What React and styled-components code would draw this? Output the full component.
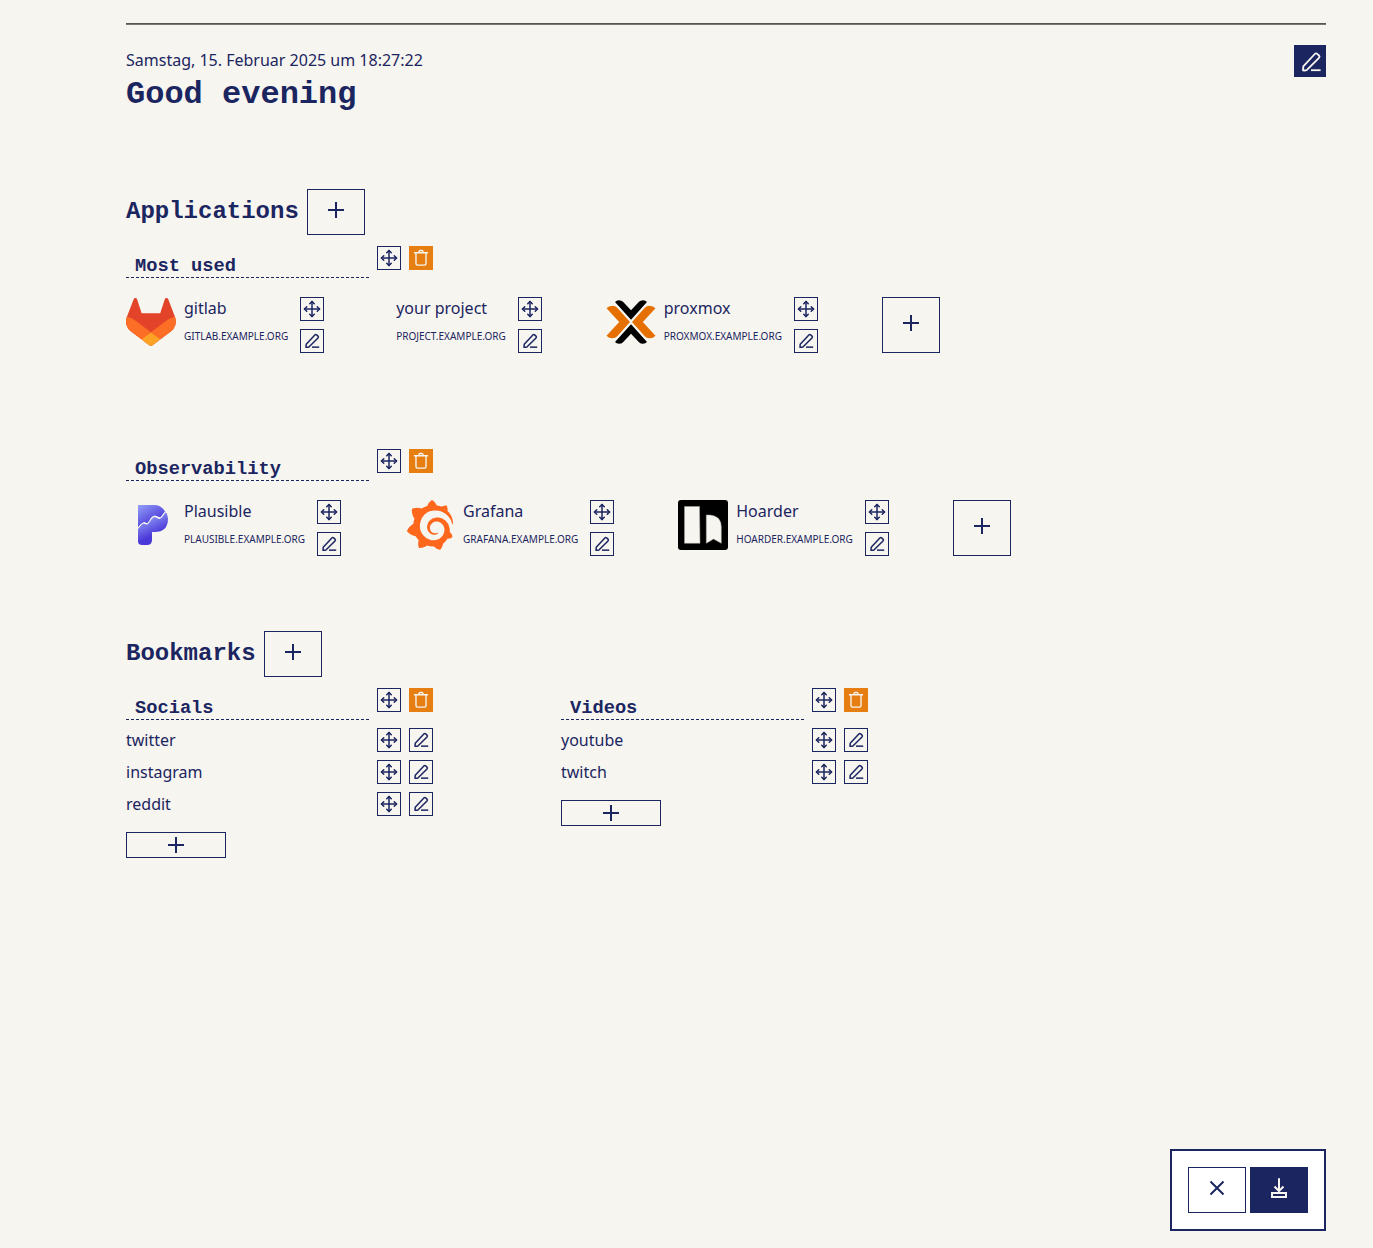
import React from "react";
import styled, { createGlobalStyle, css } from "styled-components";
import { Move } from "lucide-react";
import { SiGrafana } from "react-icons/si";

const navy = "#1b2560";
const paper = "#f7f5f0";
const orange = "#e67e12";

const GlobalStyle = createGlobalStyle`
  *, *::before, *::after { box-sizing: border-box; }
  body {
    margin: 0;
    background: ${paper};
    color: ${navy};
    font: 16px/24px "Noto Sans", sans-serif;
  }
  h1, h2, h3, p { margin: 0; }
  h1, h2, h3 { font-family: "Liberation Mono", monospace; font-weight: 700; }
  svg { display: block; flex: none; }
`;

const Shell = styled.div`
  min-height: 100vh;
  padding-left: 79px;
  display: flex;
`;

const Page = styled.main`
  width: 100%;
  max-width: 1200px;
  margin: 0 auto;
  padding: 23px 0 17px;
  display: flex;
  flex-direction: column;
`;

const Rule = styled.hr`
  width: 100%;
  margin: 0 0 20px;
  border: 0;
  border-top: 1px solid #555;
  border-bottom: 1px solid #777;
`;

const Header = styled.header`
  display: flex;
  justify-content: space-between;
  align-items: flex-start;
  margin-bottom: 71px;
`;

const Greeting = styled.div`
  padding-top: 3px;
  h1 { font-size: 32px; line-height: 46px; }
`;

const Section = styled.section`
  display: flex;
  flex-direction: column;
  margin-bottom: 75px;
`;

const SectionHead = styled.div`
  display: flex;
  align-items: center;
  gap: 8px;
  margin-bottom: 11px;
  h2 { font-size: 24px; line-height: 28px; }
`;

const Button = styled.button`
  display: flex;
  align-items: center;
  justify-content: center;
  flex: none;
  padding: 0;
  border: 1px solid ${navy};
  border-radius: 0;
  background: transparent;
  color: ${navy};
  cursor: pointer;
`;

const SmallButton = styled(Button)`
  width: 24px;
  height: 24px;
  ${(p) => p.$danger && css`
    background: ${orange};
    border-color: ${orange};
    color: ${paper};
  `}
`;

const EditButton = styled(Button)`
  width: 32px;
  height: 32px;
  padding: 2px 0 0 2px;
  background: ${navy};
  color: ${paper};
`;

const WideButton = styled(Button)`
  width: 58px;
  height: ${(p) => (p.$tall ? 56 : 46)}px;
  padding-bottom: 4px;
  ${(p) => p.$filled && css`
    background: ${navy};
    color: ${paper};
  `}
`;

const AddBookmark = styled(Button)`
  width: 100px;
  height: 26px;
  margin-top: 8px;
`;

const Groups = styled.div`
  display: flex;
  flex-direction: column;
  gap: 96px;
`;

const Columns = styled.div`
  display: flex;
  flex-wrap: wrap;
  gap: 32px 128px;
`;

const GroupHead = styled.div`
  display: flex;
  align-items: flex-start;
  gap: 8px;
  h3 { display: flex; }
`;

const NameInput = styled.input`
  width: 243px;
  height: 32px;
  padding: 8px 9px 0;
  border: 0;
  border-bottom: 1px dashed ${navy};
  border-radius: 0;
  background: transparent;
  color: inherit;
  font: inherit;
  outline: none;
`;

const Apps = styled.div`
  display: flex;
  flex-wrap: wrap;
  gap: 32px 64px;
  margin-top: 19px;
`;

const AppItem = styled.div`
  display: flex;
  gap: 8px;
`;

const AppLink = styled.a`
  display: flex;
  gap: 8px;
  color: inherit;
  text-decoration: none;
`;

const AppText = styled.span`
  display: flex;
  flex-direction: column;
  gap: 8px;
  padding-right: 4px;
  line-height: 22px;
  small { font-size: 10px; line-height: 18px; }
`;

const Stack = styled.div`
  display: flex;
  flex-direction: column;
  gap: 8px;
`;

const Bookmarks = styled.div`
  display: flex;
  flex-direction: column;
  gap: 8px;
  width: 307px;
`;

const BookmarkRow = styled.div`
  display: flex;
  gap: 8px;
  a { flex: 1; color: inherit; text-decoration: none; }
`;

const SavePanel = styled.div`
  position: sticky;
  bottom: 17px;
  align-self: flex-end;
  margin-top: auto;
  display: flex;
  gap: 4px;
  padding: 16px;
  border: 2px solid ${navy};
  background: #fff;
`;

const Stroke = ({ size = 24, width = 2, children }) => (
  <svg width={size} height={size} viewBox="0 0 24 24" fill="none" stroke="currentColor" strokeWidth={width} aria-hidden="true">
    {children}
  </svg>
);

const PlusIcon = () => <Stroke><path d="M12 4v16M4 12h16" /></Stroke>;
const CloseIcon = () => <Stroke><path d="M5.5 5.5l13 13M18.5 5.5l-13 13" /></Stroke>;
const SaveIcon = () => (
  <Stroke><path d="M12 2.3v13M7.5 10.5l4.5 4.5 4.5-4.5M5 17h14v4H5z" /></Stroke>
);
const PencilIcon = ({ size = 18 }) => (
  <Stroke size={size} width={size > 20 ? 1.8 : 2}>
    <path strokeLinejoin="round" d="M4 20.4L4.3 16.4L15.8 4C16.6 3.1 17.4 3.1 18.2 3.9L20 5.5C20.8 6.3 20.8 7.1 20 7.9L8.2 19.7C6.9 20.5 5.5 20.6 4 20.4Z" />
    <path d="M12 20.2h9.6" />
  </Stroke>
);
const TrashIcon = () => (
  <Stroke size={18} width={1.8}>
    <path strokeLinejoin="round" d="M2.6 5h18.8M9.4 5V3.4Q9.4 2 10.8 2h2.4q1.4 0 1.4 1.4V5M5.3 5v14.4q0 2 2 2h9.4q2 0 2-2V5" />
  </Stroke>
);

const MoveButton = ({ name }) => (
  <SmallButton type="button" aria-label={`Move ${name}`}><Move size={18} /></SmallButton>
);
const PencilButton = ({ name }) => (
  <SmallButton type="button" aria-label={`Edit ${name}`}><PencilIcon /></SmallButton>
);

const GitlabLogo = () => (
  <svg width="50" height="50" viewBox="0 0 25 24" aria-hidden="true">
    <path fill="#E24329" d="M24.507 9.5l-.034-.09L21.082.562a.896.896 0 0 0-1.694.091l-2.29 7.01H7.825L5.535.653A.898.898 0 0 0 3.841.563L.451 9.411.416 9.5a6.297 6.297 0 0 0 2.09 7.278l.012.01.03.022 5.16 3.867 2.56 1.935 1.554 1.176a1.051 1.051 0 0 0 1.268 0l1.555-1.176 2.56-1.935 5.197-3.89.014-.01A6.297 6.297 0 0 0 24.507 9.5Z" />
    <path fill="#FC6D26" d="M24.507 9.5l-.034-.09a11.44 11.44 0 0 0-4.56 2.051l-7.447 5.632 4.742 3.584 5.197-3.89.014-.01A6.297 6.297 0 0 0 24.507 9.5Z" />
    <path fill="#FCA326" d="M7.707 20.677l2.56 1.935 1.555 1.176a1.051 1.051 0 0 0 1.268 0l1.555-1.176 2.56-1.935-4.743-3.584-4.755 3.584Z" />
    <path fill="#FC6D26" d="M5.01 11.461a11.43 11.43 0 0 0-4.56-2.05L.416 9.5a6.297 6.297 0 0 0 2.09 7.278l.012.01.03.022 5.16 3.867 4.745-3.584-7.444-5.632Z" />
  </svg>
);

const ProxmoxLogo = () => (
  <svg width="50" height="50" viewBox="0 0 50 50" aria-hidden="true">
    <path d="M9 5Q10.5 3.3 13 3.3Q15.5 3.3 17 4.8L25 13.3L33 4.8Q34.5 3.3 37 3.3Q39.5 3.3 41 5L25 22.8Z" />
    <path d="M9 45Q10.5 46.7 13 46.7Q15.5 46.7 17 45.2L25 36.7L33 45.2Q34.5 46.7 37 46.7Q39.5 46.7 41 45L25 27.2Z" />
    <path fill="#E57000" d="M.5 11.3Q2.7 8.7 6.5 8.7Q9.3 8.7 11 10.5L24 25L11 39.5Q9.3 41.3 6.5 41.3Q2.7 41.3 .5 38.7L13.2 25Z" />
    <path fill="#E57000" d="M49.5 11.3Q47.3 8.7 43.5 8.7Q40.7 8.7 39 10.5L26 25L39 39.5Q40.7 41.3 43.5 41.3Q47.3 41.3 49.5 38.7L36.8 25Z" />
  </svg>
);

const PlausibleLogo = () => (
  <svg width="50" height="50" viewBox="0 0 50 50" aria-hidden="true">
    <defs>
      <linearGradient id="plausibleTop" gradientUnits="userSpaceOnUse" x1="16" y1="4" x2="28" y2="24">
        <stop offset="0" stopColor="#909cf7" />
        <stop offset="1" stopColor="#4b38d8" />
      </linearGradient>
      <linearGradient id="plausibleBottom" gradientUnits="userSpaceOnUse" x1="15" y1="19" x2="24" y2="37">
        <stop offset="0" stopColor="#909cf7" />
        <stop offset="1" stopColor="#4b38d8" />
      </linearGradient>
    </defs>
    <path fill="url(#plausibleTop)" d="M12 5H28.5Q35 5 39 11.5L34.5 17.5L29 15.5L22 23.5L18 22L12 28Z" />
    <path fill="url(#plausibleBottom)" d="M12 28.5L16.5 23L21.5 24.2L28.3 16.5L33.8 18.5L39.3 11.2Q42 14 42 18.5Q42 32 28.5 32H26V40Q26 45 21 45H16Q12 45 12 41Z" />
    <path fill="none" stroke={paper} strokeWidth="1.1" strokeLinejoin="round" d="M11.8 28.3C14.5 26 14.5 23.5 17.5 23C19 22.8 20 24.6 21.6 23.6C24 22 25.2 16.4 28.3 16.4C30.3 16.4 31.5 19 33.8 18.3C36 17.5 37 14 39.8 11.8" />
  </svg>
);

const HoarderLogo = () => (
  <svg width="50" height="50" viewBox="0 0 50 50" aria-hidden="true">
    <rect width="50" height="50" rx="3" />
    <g fill={paper} stroke="#aaa9a4" strokeWidth=".5">
      <path d="M6.5 6.5H21.5L22 43.3H6.5Z" />
      <path d="M28.3 15H32Q43.3 16 43.3 27V43.3L35.5 39L28.3 43.3Z" />
    </g>
  </svg>
);

const groups = [
  {
    name: "Most used",
    apps: [
      { name: "gitlab", url: "GITLAB.EXAMPLE.ORG", logo: <GitlabLogo /> },
      { name: "your project", url: "PROJECT.EXAMPLE.ORG", logo: <span /> },
      { name: "proxmox", url: "PROXMOX.EXAMPLE.ORG", logo: <ProxmoxLogo /> },
    ],
  },
  {
    name: "Observability",
    apps: [
      { name: "Plausible", url: "PLAUSIBLE.EXAMPLE.ORG", logo: <PlausibleLogo /> },
      { name: "Grafana", url: "GRAFANA.EXAMPLE.ORG", logo: <SiGrafana size={50} color="#ff671d" /> },
      { name: "Hoarder", url: "HOARDER.EXAMPLE.ORG", logo: <HoarderLogo /> },
    ],
  },
];

const bookmarks = [
  { name: "Socials", links: ["twitter", "instagram", "reddit"] },
  { name: "Videos", links: ["youtube", "twitch"] },
];

const GroupHeader = ({ name }) => (
  <GroupHead>
    <h3><NameInput defaultValue={name} aria-label="Category name" /></h3>
    <MoveButton name={name} />
    <SmallButton type="button" $danger aria-label={`Delete ${name}`}><TrashIcon /></SmallButton>
  </GroupHead>
);

export default function App() {
  return (
    <Shell>
      <GlobalStyle />
      <Page>
        <Rule />
        <Header>
          <Greeting>
            <p>Samstag, 15. Februar 2025 um 18:27:22</p>
            <h1>Good evening</h1>
          </Greeting>
          <EditButton type="button" aria-label="Edit page"><PencilIcon size={24} /></EditButton>
        </Header>

        <Section>
          <SectionHead>
            <h2>Applications</h2>
            <WideButton type="button" aria-label="Add application category"><PlusIcon /></WideButton>
          </SectionHead>
          <Groups>
            {groups.map((group) => (
              <div key={group.name}>
                <GroupHeader name={group.name} />
                <Apps>
                  {group.apps.map((app) => (
                    <AppItem key={app.name}>
                      <AppLink href="#">
                        {app.logo}
                        <AppText>
                          <span>{app.name}</span>
                          <small>{app.url}</small>
                        </AppText>
                      </AppLink>
                      <Stack>
                        <MoveButton name={app.name} />
                        <PencilButton name={app.name} />
                      </Stack>
                    </AppItem>
                  ))}
                  <WideButton type="button" $tall aria-label={`Add application to ${group.name}`}><PlusIcon /></WideButton>
                </Apps>
              </div>
            ))}
          </Groups>
        </Section>

        <Section>
          <SectionHead>
            <h2>Bookmarks</h2>
            <WideButton type="button" aria-label="Add bookmark category"><PlusIcon /></WideButton>
          </SectionHead>
          <Columns>
            {bookmarks.map((group) => (
              <Bookmarks key={group.name}>
                <GroupHeader name={group.name} />
                {group.links.map((link) => (
                  <BookmarkRow key={link}>
                    <a href="#">{link}</a>
                    <MoveButton name={link} />
                    <PencilButton name={link} />
                  </BookmarkRow>
                ))}
                <AddBookmark type="button" aria-label={`Add bookmark to ${group.name}`}><PlusIcon /></AddBookmark>
              </Bookmarks>
            ))}
          </Columns>
        </Section>

        <SavePanel>
          <WideButton type="button" aria-label="Discard changes"><CloseIcon /></WideButton>
          <WideButton type="button" $filled aria-label="Save changes"><SaveIcon /></WideButton>
        </SavePanel>
      </Page>
    </Shell>
  );
}
